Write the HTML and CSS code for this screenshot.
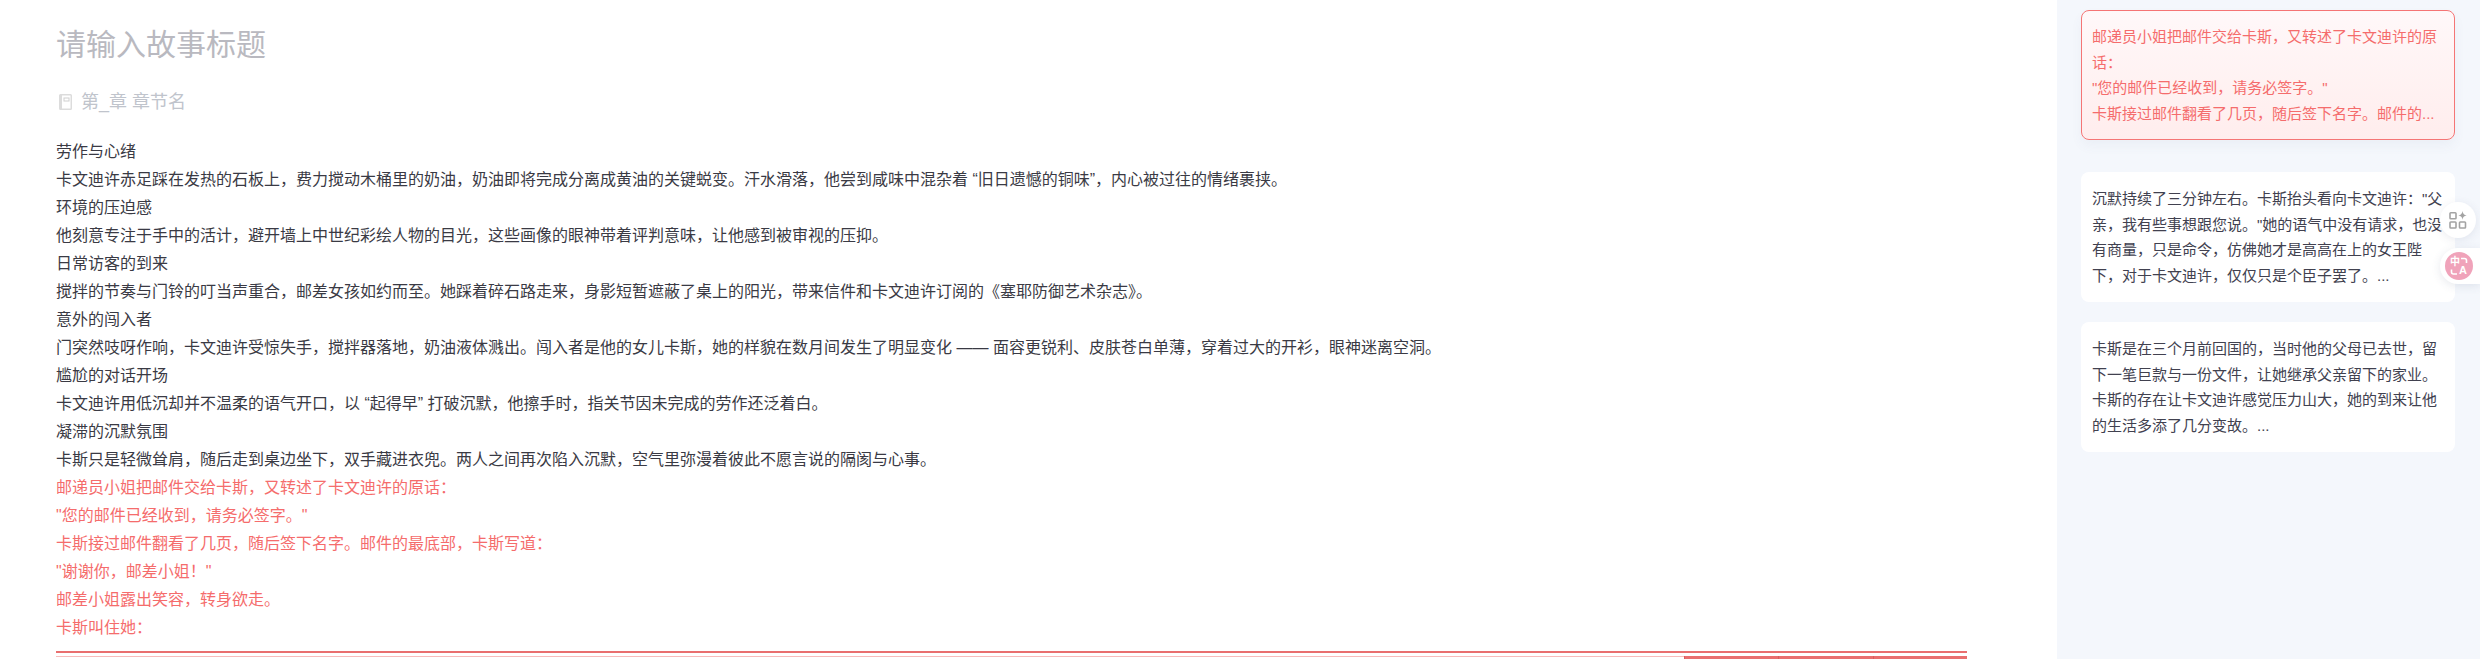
FILE: index.html
```html
<!DOCTYPE html>
<html lang="zh-CN">
<head>
<meta charset="utf-8">
<title>故事编辑</title>
<link rel="stylesheet" href="styles.css">
</head>
<body>
<div class="app">
  <main class="editor">
    <h1 class="story-title">请输入故事标题</h1>
    <div class="chapter">
      <svg class="chapter-icon" width="13" height="16" viewBox="0 0 13 16"><path d="M1.5 0h10A1.5 1.5 0 0 1 13 1.5v13a1.5 1.5 0 0 1-1.5 1.5h-10A1.5 1.5 0 0 1 0 14.500v-13A1.500 1.500 0 0 1 1.500 0z" fill="#dcdcdc"/><rect x="3" y="1.500" width="8.500" height="13" fill="#fff"/><rect x="5" y="4" width="5" height="3" fill="none" stroke="#d0d0d0"/></svg>
      <span>第_章 章节名</span>
    </div>
    <div class="story">
      <p>劳作与心绪</p>
      <p>卡文迪许赤足踩在发热的石板上，费力搅动木桶里的奶油，奶油即将完成分离成黄油的关键蜕变。汗水滑落，他尝到咸味中混杂着 “旧日遗憾的铜味”，内心被过往的情绪裹挟。</p>
      <p>环境的压迫感</p>
      <p>他刻意专注于手中的活计，避开墙上中世纪彩绘人物的目光，这些画像的眼神带着评判意味，让他感到被审视的压抑。</p>
      <p>日常访客的到来</p>
      <p>搅拌的节奏与门铃的叮当声重合，邮差女孩如约而至。她踩着碎石路走来，身影短暂遮蔽了桌上的阳光，带来信件和卡文迪许订阅的《塞耶防御艺术杂志》。</p>
      <p>意外的闯入者</p>
      <p>门突然吱呀作响，卡文迪许受惊失手，搅拌器落地，奶油液体溅出。闯入者是他的女儿卡斯，她的样貌在数月间发生了明显变化 —— 面容更锐利、皮肤苍白单薄，穿着过大的开衫，眼神迷离空洞。</p>
      <p>尴尬的对话开场</p>
      <p>卡文迪许用低沉却并不温柔的语气开口，以 “起得早” 打破沉默，他擦手时，指关节因未完成的劳作还泛着白。</p>
      <p>凝滞的沉默氛围</p>
      <p>卡斯只是轻微耸肩，随后走到桌边坐下，双手藏进衣兜。两人之间再次陷入沉默，空气里弥漫着彼此不愿言说的隔阂与心事。</p>
      <p class="hl">邮递员小姐把邮件交给卡斯，又转述了卡文迪许的原话：</p>
      <p class="hl">"您的邮件已经收到，请务必签字。"</p>
      <p class="hl">卡斯接过邮件翻看了几页，随后签下名字。邮件的最底部，卡斯写道：</p>
      <p class="hl">"谢谢你，邮差小姐！"</p>
      <p class="hl">邮差小姐露出笑容，转身欲走。</p>
      <p class="hl">卡斯叫住她：</p>
    </div>
    <div class="panel">
      <div class="panel-row">
        <div class="panel-input"></div>
        <div class="panel-btn"></div>
        <div class="panel-btn"></div>
        <div class="panel-btn"></div>
      </div>
    </div>
  </main>
  <aside class="side">
    <div class="card card-active">邮递员小姐把邮件交给卡斯，又转述了卡文迪许的原话：<br>"您的邮件已经收到，请务必签字。"<br>卡斯接过邮件翻看了几页，随后签下名字。邮件的...</div>
    <div class="card">沉默持续了三分钟左右。卡斯抬头看向卡文迪许："父亲，我有些事想跟您说。"她的语气中没有请求，也没有商量，只是命令，仿佛她才是高高在上的女王陛下，对于卡文迪许，仅仅只是个臣子罢了。...</div>
    <div class="card">卡斯是在三个月前回国的，当时他的父母已去世，留下一笔巨款与一份文件，让她继承父亲留下的家业。卡斯的存在让卡文迪许感觉压力山大，她的到来让他的生活多添了几分变故。...</div>
    <button class="fab fab-tools" type="button" aria-label="工具">
      <svg width="18" height="18" viewBox="0 0 18 18"><g fill="none" stroke="#a3a3a3" stroke-width="1.600"><rect x="1" y="1.800" width="6" height="6" rx=".8"/><rect x="1" y="11" width="6" height="6" rx=".8"/><rect x="10.500" y="11" width="6" height="6" rx=".8"/></g><path d="M13.500 0c.4 2.800 1.400 3.900 4.200 4.400-2.800.4-3.800 1.500-4.200 4.300-.4-2.800-1.400-3.900-4.200-4.300C12.100 3.900 13.100 2.800 13.500 0z" fill="#a3a3a3"/></svg>
    </button>
    <div class="fab-translate">
      <span class="translate-badge">
        <span class="zh">中</span><span class="en">A</span>
        <svg class="translate-arcs" width="28" height="28" viewBox="0 0 28 28"><g fill="none" stroke="#fff" stroke-width="1.600"><path d="M16 6.500h3.500a2 2 0 0 1 2 2V11"/><path d="M6.500 17.500V20a2 2 0 0 0 2 2H12"/></g></svg>
      </span>
    </div>
  </aside>
</div>
</body>
</html>
```
FILE: styles.css
```css
* { box-sizing: border-box; }
html, body { margin: 0; height: 100%; overflow: hidden; background: #fff; }
body { font-family: "Liberation Sans", "Noto Sans CJK SC", sans-serif; }
.app { display: flex; height: 659px; overflow: hidden; }
.editor { flex: 1; min-width: 0; padding: 0 90px 0 56px; }
.story-title { margin: 0; padding-top: 24px; font-size: 30px; line-height: 42px; font-weight: 400; color: #b9b9c0; }
.chapter { display: flex; align-items: center; gap: 9px; margin-top: 25px; padding-left: 3px; height: 22px; font-size: 18px; line-height: 22px; color: #c0c4cc; }
.chapter-icon { flex: none; }
.story { margin-top: 25px; font-size: 16px; line-height: 28px; color: #3a3a44; }
.story p { margin: 0; height: 28px; white-space: nowrap; }
.story .hl { color: #f56c6c; }
.panel { margin-top: 9px; border-top: 2px solid #e96f6f; padding-top: 3px; }
.panel-row { display: flex; height: 12px; }
.panel-input { width: 1628px; border-top: 1px solid #f8bcbc; }
.panel-btn { flex: 1; background: #e96f6f; border-left: 1px solid #d85f5f; }
.side { position: relative; flex: none; width: 423px; padding: 10px 25px 0 24px; background: #f4f7fc; }
.card { height: 130px; margin-bottom: 20px; padding: 14px 11px; border-radius: 8px; background: #fff; color: #41414f; font-size: 15px; line-height: 25.500px; }
.card-active { margin-bottom: 32px; border: 1px solid #f57575; padding: 13px 10px; background: linear-gradient(#fff8f9, #ffeded); color: #f56c6c; box-shadow: 0 6px 12px rgba(80, 90, 130, .05); }
.fab { position: absolute; top: 202px; left: 383px; display: flex; align-items: center; justify-content: center; width: 36px; height: 36px; padding: 0; border: 0; border-radius: 50%; background: #fff; box-shadow: 0 2px 10px rgba(60, 70, 110, .1); }
.fab-translate { position: absolute; top: 248px; left: 383px; right: 0; height: 36px; display: flex; align-items: center; padding-left: 5px; border-radius: 18px 0 0 18px; background: #fff; box-shadow: 0 2px 10px rgba(60, 70, 110, .12); }
.translate-badge { position: relative; display: block; width: 28px; height: 28px; border-radius: 50%; background: #f0a3ba; color: #fff; font-weight: 700; }
.translate-arcs { position: absolute; left: 0; top: 0; }
.zh { position: absolute; left: 5px; top: 4px; font-size: 10px; line-height: 12px; }
.en { position: absolute; left: 14px; top: 12px; font-size: 11px; line-height: 12px; }
```
